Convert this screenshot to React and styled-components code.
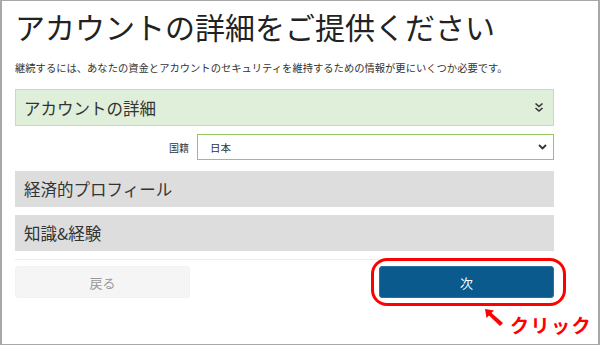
import React from "react";
import styled, { createGlobalStyle } from "styled-components";

const Global = createGlobalStyle`
  html, body { margin: 0; padding: 0; background: #fff; }
  body { font-family: "Noto Sans CJK JP", "Noto Sans", sans-serif; color: #333; }
`;

const Frame = styled.div`
  position: relative;
  box-sizing: border-box;
  width: 600px;
  height: 345px;
  border-style: solid;
  border-color: #a8a8a8;
  border-width: 1px 2px 1px 2px;
  padding: 7px 44px 0 13px;
  overflow: hidden;
`;

const Title = styled.h1`
  margin: 0;
  font-size: 30px;
  line-height: 36px;
  font-weight: 400;
  color: #222;
  letter-spacing: 0;
`;

const Lead = styled.p`
  margin: 17px 0 0;
  font-size: 10.3px;
  line-height: 14px;
  color: #333;
`;

const Panel = styled.div`
  box-sizing: border-box;
  display: flex;
  align-items: center;
  justify-content: space-between;
  height: ${(p) => (p.$open ? 37 : 36)}px;
  margin-top: ${(p) => p.$mt}px;
  padding: 0 9px 0 8px;
  background: ${(p) => (p.$open ? "#dfefd9" : "#dddddd")};
  border: 1px solid ${(p) => (p.$open ? "#cdd6c8" : "#dddddd")};
  font-size: 16.5px;
  color: #333;
`;

const FieldRow = styled.div`
  display: flex;
  align-items: center;
  justify-content: flex-end;
  gap: 8px;
  margin-top: 8px;
`;

const Label = styled.span`
  font-size: 10px;
  color: #333;
`;

const Select = styled.div`
  box-sizing: border-box;
  width: 357px;
  height: 26px;
  display: flex;
  align-items: center;
  justify-content: space-between;
  padding: 0 6px 0 12px;
  border: 1px solid #93c85f;
  font-size: 10.5px;
  color: #333;
`;

const Divider = styled.div`
  margin-top: 8px;
  height: 1px;
  background: #ececec;
`;

const Actions = styled.div`
  display: flex;
  justify-content: space-between;
  margin-top: 6px;
`;

const Button = styled.div`
  box-sizing: border-box;
  width: ${(p) => p.$w}px;
  height: 32px;
  display: flex;
  align-items: center;
  justify-content: center;
  border-radius: 3px;
  font-size: 13px;
  background: ${(p) => (p.$primary ? "#0b5a8e" : "#f5f5f5")};
  color: ${(p) => (p.$primary ? "#ffffff" : "#999999")};
  border: 1px solid ${(p) => (p.$primary ? "#2b6f9d" : "#f2f2f2")};
`;

const Highlight = styled.div`
  position: absolute;
  left: 369px;
  top: 257px;
  width: 195px;
  height: 48px;
  box-sizing: border-box;
  border: 3px solid #ff0000;
  border-radius: 16px;
`;

const Callout = styled.div`
  position: absolute;
  left: 482px;
  top: 307px;
  display: flex;
  align-items: flex-start;
  gap: 5px;
  white-space: nowrap;
`;

const CalloutText = styled.span`
  font-family: "Noto Sans CJK JP", sans-serif;
  font-weight: 700;
  font-size: 19px;
  line-height: 24px;
  letter-spacing: 1.5px;
  color: #ff0000;
  margin-top: 5px;
  white-space: nowrap;
`;

const Chevrons = () => (
  <svg width="10" height="11" viewBox="0 0 10 11" fill="none" stroke="#333" strokeWidth="1.6">
    <polyline points="1.5,1.5 5,4.5 8.5,1.5" />
    <polyline points="1.5,6 5,9 8.5,6" />
  </svg>
);

const Caret = () => (
  <svg width="9" height="6" viewBox="0 0 9 6" fill="none" stroke="#333" strokeWidth="1.8">
    <polyline points="1,1 4.5,4.5 8,1" />
  </svg>
);

const Arrow = () => (
  <svg width="21" height="19" viewBox="0 0 21 19">
    <polygon points="1,1 10,2.5 7.5,5 19,15 16,18 5,7.5 2.5,10" fill="#ff0000" />
  </svg>
);

export default function App() {
  return (
    <>
      <Global />
      <Frame>
        <Title>アカウントの詳細をご提供ください</Title>
        <Lead>継続するには、あなたの資金とアカウントのセキュリティを維持するための情報が更にいくつか必要です。</Lead>
        <Panel $open $mt={14}>
          <span>アカウントの詳細</span>
          <Chevrons />
        </Panel>
        <FieldRow>
          <Label>国籍</Label>
          <Select>
            <span>日本</span>
            <Caret />
          </Select>
        </FieldRow>
        <Panel $mt={11}>
          <span>経済的プロフィール</span>
        </Panel>
        <Panel $mt={8}>
          <span>知識&amp;経験</span>
        </Panel>
        <Divider />
        <Actions>
          <Button $w={175}>戻る</Button>
          <Button $w={175} $primary>次</Button>
        </Actions>
        <Highlight />
        <Callout>
          <Arrow />
          <CalloutText>クリック</CalloutText>
        </Callout>
      </Frame>
    </>
  );
}
